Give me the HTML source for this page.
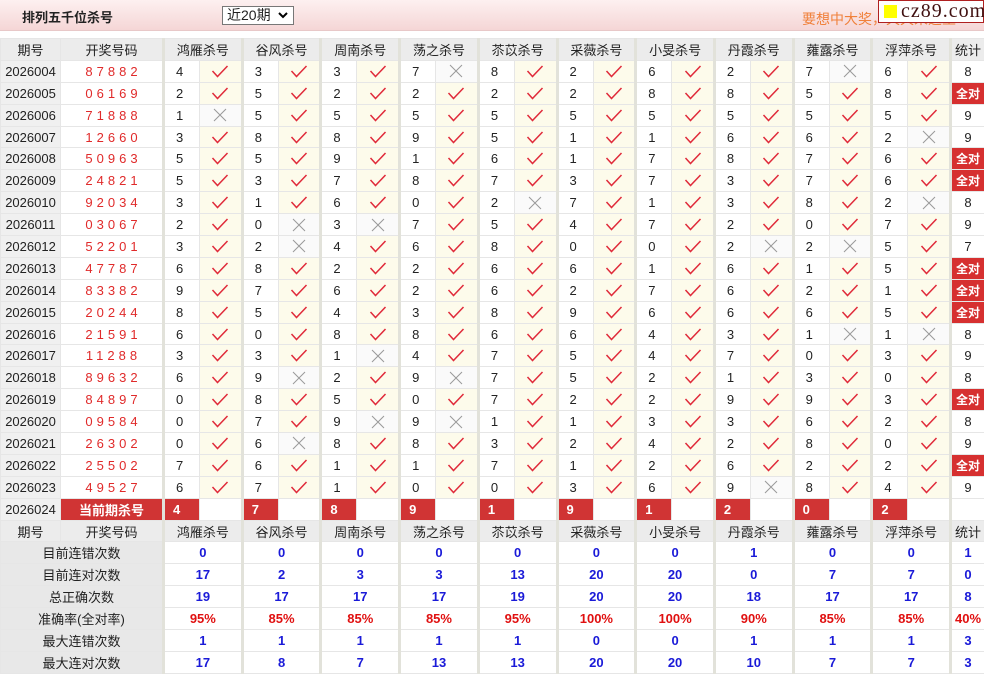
<!DOCTYPE html>
<html><head><meta charset="utf-8">
<style>
*{margin:0;padding:0;box-sizing:border-box}
body{width:984px;height:677px;background:#fff;font-family:"Liberation Sans","Noto Sans CJK SC",sans-serif;font-size:13px;color:#222;position:relative;overflow:hidden}
.bar{position:absolute;left:0;top:0;width:984px;height:31px;background:linear-gradient(#fdf0f0,#f5d6d6);border-bottom:1px solid #e8c8c8}
.ttl{position:absolute;left:22px;top:7px;font-weight:bold;font-size:13px;color:#222}
.sel{position:absolute;left:222px;top:6px;width:72px;height:19px;border:1px solid #777;background:#fff;font-size:14px;padding-left:4px;line-height:17px}
.sel svg{position:absolute;right:5px;top:5px}
.adv{position:absolute;left:802px;top:9px;color:#f0803a;font-size:14px}
.logo{position:absolute;left:878px;top:0;width:106px;height:23px;background:#fff;border:1px solid #b02020;font-family:"Liberation Serif",serif;font-size:20px;color:#401010;line-height:20px;padding-left:22px;letter-spacing:1px}
.logo i{position:absolute;left:5px;top:4px;width:13px;height:13px;background:#ffff00}
table{position:absolute;left:0;top:38px;width:984px;border-collapse:collapse;table-layout:fixed}
td{height:21.9px;border:1px solid #e6e6e6;text-align:center;white-space:nowrap;padding:0}
.h td{background:#ececec}
td.g{border-left:3px solid #e2e2da}
td.p{background:#f0f0f0}
td.n{color:#e02a2a;letter-spacing:4px;padding-left:4px}
td.v{text-align:left;padding-left:11px}
td.y{background:#fdfbeb}
td.w{background:#fafafa}
td.a{background:#d63030;color:#fff;font-weight:bold;font-size:12px}
td.r{background:#d03434;color:#fff;font-weight:bold;text-align:left;padding-left:8px}
td.cur{background:#d03434;color:#fff;font-weight:bold}
td.l{background:#e8e8e8}
td.b{color:#1a1ad8;font-weight:bold}
td.q{color:#e01010;font-weight:bold}
td svg{display:block;margin:0 auto}
</style></head><body>
<svg width="0" height="0" style="position:absolute"><defs>
<symbol id="c" viewBox="0 0 18 13"><path d="M1.5 6 L6.5 11.5 L16.5 1" fill="none" stroke="#e02a3a" stroke-width="1.5"/></symbol>
<symbol id="x" viewBox="0 0 14 14"><path d="M1 1 L13 13 M13 1 L1 13" fill="none" stroke="#999" stroke-width="1"/></symbol>
</defs></svg>
<div class="bar"><div class="ttl">排列五千位杀号</div><div class="sel">近20期<svg width="10" height="7" viewBox="0 0 10 7"><path d="M1 1 L5 5 L9 1" fill="none" stroke="#000" stroke-width="2"/></svg></div><div class="adv">要想中大奖，天天来这里</div><div class="logo"><i></i>cz89.com</div></div>
<table>
<colgroup><col style="width:60px"><col style="width:103px">
<col style="width:36px"><col style="width:42.7px"><col style="width:36px"><col style="width:42.7px"><col style="width:36px"><col style="width:42.7px"><col style="width:36px"><col style="width:42.7px"><col style="width:36px"><col style="width:42.7px"><col style="width:36px"><col style="width:42.7px"><col style="width:36px"><col style="width:42.7px"><col style="width:36px"><col style="width:42.7px"><col style="width:36px"><col style="width:42.7px"><col style="width:36px"><col style="width:42.7px">
<col style="width:34px"></colgroup>
<tr class="h"><td>期号</td><td>开奖号码</td><td class="g" colspan="2">鸿雁杀号</td><td class="g" colspan="2">谷风杀号</td><td class="g" colspan="2">周南杀号</td><td class="g" colspan="2">荡之杀号</td><td class="g" colspan="2">苶苡杀号</td><td class="g" colspan="2">采薇杀号</td><td class="g" colspan="2">小旻杀号</td><td class="g" colspan="2">丹霞杀号</td><td class="g" colspan="2">蕹露杀号</td><td class="g" colspan="2">浮萍杀号</td><td class="g">统计</td></tr>
<tr><td class="p">2026004</td><td class="n">87882</td><td class="g v">4</td><td class="y"><svg width="18" height="13"><use href="#c"/></svg></td><td class="g v">3</td><td class="y"><svg width="18" height="13"><use href="#c"/></svg></td><td class="g v">3</td><td class="y"><svg width="18" height="13"><use href="#c"/></svg></td><td class="g v">7</td><td class="w"><svg width="14" height="14"><use href="#x"/></svg></td><td class="g v">8</td><td class="y"><svg width="18" height="13"><use href="#c"/></svg></td><td class="g v">2</td><td class="y"><svg width="18" height="13"><use href="#c"/></svg></td><td class="g v">6</td><td class="y"><svg width="18" height="13"><use href="#c"/></svg></td><td class="g v">2</td><td class="y"><svg width="18" height="13"><use href="#c"/></svg></td><td class="g v">7</td><td class="w"><svg width="14" height="14"><use href="#x"/></svg></td><td class="g v">6</td><td class="y"><svg width="18" height="13"><use href="#c"/></svg></td><td class="g">8</td></tr>
<tr><td class="p">2026005</td><td class="n">06169</td><td class="g v">2</td><td class="y"><svg width="18" height="13"><use href="#c"/></svg></td><td class="g v">5</td><td class="y"><svg width="18" height="13"><use href="#c"/></svg></td><td class="g v">2</td><td class="y"><svg width="18" height="13"><use href="#c"/></svg></td><td class="g v">2</td><td class="y"><svg width="18" height="13"><use href="#c"/></svg></td><td class="g v">2</td><td class="y"><svg width="18" height="13"><use href="#c"/></svg></td><td class="g v">2</td><td class="y"><svg width="18" height="13"><use href="#c"/></svg></td><td class="g v">8</td><td class="y"><svg width="18" height="13"><use href="#c"/></svg></td><td class="g v">8</td><td class="y"><svg width="18" height="13"><use href="#c"/></svg></td><td class="g v">5</td><td class="y"><svg width="18" height="13"><use href="#c"/></svg></td><td class="g v">8</td><td class="y"><svg width="18" height="13"><use href="#c"/></svg></td><td class="g a">全对</td></tr>
<tr><td class="p">2026006</td><td class="n">71888</td><td class="g v">1</td><td class="w"><svg width="14" height="14"><use href="#x"/></svg></td><td class="g v">5</td><td class="y"><svg width="18" height="13"><use href="#c"/></svg></td><td class="g v">5</td><td class="y"><svg width="18" height="13"><use href="#c"/></svg></td><td class="g v">5</td><td class="y"><svg width="18" height="13"><use href="#c"/></svg></td><td class="g v">5</td><td class="y"><svg width="18" height="13"><use href="#c"/></svg></td><td class="g v">5</td><td class="y"><svg width="18" height="13"><use href="#c"/></svg></td><td class="g v">5</td><td class="y"><svg width="18" height="13"><use href="#c"/></svg></td><td class="g v">5</td><td class="y"><svg width="18" height="13"><use href="#c"/></svg></td><td class="g v">5</td><td class="y"><svg width="18" height="13"><use href="#c"/></svg></td><td class="g v">5</td><td class="y"><svg width="18" height="13"><use href="#c"/></svg></td><td class="g">9</td></tr>
<tr><td class="p">2026007</td><td class="n">12660</td><td class="g v">3</td><td class="y"><svg width="18" height="13"><use href="#c"/></svg></td><td class="g v">8</td><td class="y"><svg width="18" height="13"><use href="#c"/></svg></td><td class="g v">8</td><td class="y"><svg width="18" height="13"><use href="#c"/></svg></td><td class="g v">9</td><td class="y"><svg width="18" height="13"><use href="#c"/></svg></td><td class="g v">5</td><td class="y"><svg width="18" height="13"><use href="#c"/></svg></td><td class="g v">1</td><td class="y"><svg width="18" height="13"><use href="#c"/></svg></td><td class="g v">1</td><td class="y"><svg width="18" height="13"><use href="#c"/></svg></td><td class="g v">6</td><td class="y"><svg width="18" height="13"><use href="#c"/></svg></td><td class="g v">6</td><td class="y"><svg width="18" height="13"><use href="#c"/></svg></td><td class="g v">2</td><td class="w"><svg width="14" height="14"><use href="#x"/></svg></td><td class="g">9</td></tr>
<tr><td class="p">2026008</td><td class="n">50963</td><td class="g v">5</td><td class="y"><svg width="18" height="13"><use href="#c"/></svg></td><td class="g v">5</td><td class="y"><svg width="18" height="13"><use href="#c"/></svg></td><td class="g v">9</td><td class="y"><svg width="18" height="13"><use href="#c"/></svg></td><td class="g v">1</td><td class="y"><svg width="18" height="13"><use href="#c"/></svg></td><td class="g v">6</td><td class="y"><svg width="18" height="13"><use href="#c"/></svg></td><td class="g v">1</td><td class="y"><svg width="18" height="13"><use href="#c"/></svg></td><td class="g v">7</td><td class="y"><svg width="18" height="13"><use href="#c"/></svg></td><td class="g v">8</td><td class="y"><svg width="18" height="13"><use href="#c"/></svg></td><td class="g v">7</td><td class="y"><svg width="18" height="13"><use href="#c"/></svg></td><td class="g v">6</td><td class="y"><svg width="18" height="13"><use href="#c"/></svg></td><td class="g a">全对</td></tr>
<tr><td class="p">2026009</td><td class="n">24821</td><td class="g v">5</td><td class="y"><svg width="18" height="13"><use href="#c"/></svg></td><td class="g v">3</td><td class="y"><svg width="18" height="13"><use href="#c"/></svg></td><td class="g v">7</td><td class="y"><svg width="18" height="13"><use href="#c"/></svg></td><td class="g v">8</td><td class="y"><svg width="18" height="13"><use href="#c"/></svg></td><td class="g v">7</td><td class="y"><svg width="18" height="13"><use href="#c"/></svg></td><td class="g v">3</td><td class="y"><svg width="18" height="13"><use href="#c"/></svg></td><td class="g v">7</td><td class="y"><svg width="18" height="13"><use href="#c"/></svg></td><td class="g v">3</td><td class="y"><svg width="18" height="13"><use href="#c"/></svg></td><td class="g v">7</td><td class="y"><svg width="18" height="13"><use href="#c"/></svg></td><td class="g v">6</td><td class="y"><svg width="18" height="13"><use href="#c"/></svg></td><td class="g a">全对</td></tr>
<tr><td class="p">2026010</td><td class="n">92034</td><td class="g v">3</td><td class="y"><svg width="18" height="13"><use href="#c"/></svg></td><td class="g v">1</td><td class="y"><svg width="18" height="13"><use href="#c"/></svg></td><td class="g v">6</td><td class="y"><svg width="18" height="13"><use href="#c"/></svg></td><td class="g v">0</td><td class="y"><svg width="18" height="13"><use href="#c"/></svg></td><td class="g v">2</td><td class="w"><svg width="14" height="14"><use href="#x"/></svg></td><td class="g v">7</td><td class="y"><svg width="18" height="13"><use href="#c"/></svg></td><td class="g v">1</td><td class="y"><svg width="18" height="13"><use href="#c"/></svg></td><td class="g v">3</td><td class="y"><svg width="18" height="13"><use href="#c"/></svg></td><td class="g v">8</td><td class="y"><svg width="18" height="13"><use href="#c"/></svg></td><td class="g v">2</td><td class="w"><svg width="14" height="14"><use href="#x"/></svg></td><td class="g">8</td></tr>
<tr><td class="p">2026011</td><td class="n">03067</td><td class="g v">2</td><td class="y"><svg width="18" height="13"><use href="#c"/></svg></td><td class="g v">0</td><td class="w"><svg width="14" height="14"><use href="#x"/></svg></td><td class="g v">3</td><td class="w"><svg width="14" height="14"><use href="#x"/></svg></td><td class="g v">7</td><td class="y"><svg width="18" height="13"><use href="#c"/></svg></td><td class="g v">5</td><td class="y"><svg width="18" height="13"><use href="#c"/></svg></td><td class="g v">4</td><td class="y"><svg width="18" height="13"><use href="#c"/></svg></td><td class="g v">7</td><td class="y"><svg width="18" height="13"><use href="#c"/></svg></td><td class="g v">2</td><td class="y"><svg width="18" height="13"><use href="#c"/></svg></td><td class="g v">0</td><td class="y"><svg width="18" height="13"><use href="#c"/></svg></td><td class="g v">7</td><td class="y"><svg width="18" height="13"><use href="#c"/></svg></td><td class="g">9</td></tr>
<tr><td class="p">2026012</td><td class="n">52201</td><td class="g v">3</td><td class="y"><svg width="18" height="13"><use href="#c"/></svg></td><td class="g v">2</td><td class="w"><svg width="14" height="14"><use href="#x"/></svg></td><td class="g v">4</td><td class="y"><svg width="18" height="13"><use href="#c"/></svg></td><td class="g v">6</td><td class="y"><svg width="18" height="13"><use href="#c"/></svg></td><td class="g v">8</td><td class="y"><svg width="18" height="13"><use href="#c"/></svg></td><td class="g v">0</td><td class="y"><svg width="18" height="13"><use href="#c"/></svg></td><td class="g v">0</td><td class="y"><svg width="18" height="13"><use href="#c"/></svg></td><td class="g v">2</td><td class="w"><svg width="14" height="14"><use href="#x"/></svg></td><td class="g v">2</td><td class="w"><svg width="14" height="14"><use href="#x"/></svg></td><td class="g v">5</td><td class="y"><svg width="18" height="13"><use href="#c"/></svg></td><td class="g">7</td></tr>
<tr><td class="p">2026013</td><td class="n">47787</td><td class="g v">6</td><td class="y"><svg width="18" height="13"><use href="#c"/></svg></td><td class="g v">8</td><td class="y"><svg width="18" height="13"><use href="#c"/></svg></td><td class="g v">2</td><td class="y"><svg width="18" height="13"><use href="#c"/></svg></td><td class="g v">2</td><td class="y"><svg width="18" height="13"><use href="#c"/></svg></td><td class="g v">6</td><td class="y"><svg width="18" height="13"><use href="#c"/></svg></td><td class="g v">6</td><td class="y"><svg width="18" height="13"><use href="#c"/></svg></td><td class="g v">1</td><td class="y"><svg width="18" height="13"><use href="#c"/></svg></td><td class="g v">6</td><td class="y"><svg width="18" height="13"><use href="#c"/></svg></td><td class="g v">1</td><td class="y"><svg width="18" height="13"><use href="#c"/></svg></td><td class="g v">5</td><td class="y"><svg width="18" height="13"><use href="#c"/></svg></td><td class="g a">全对</td></tr>
<tr><td class="p">2026014</td><td class="n">83382</td><td class="g v">9</td><td class="y"><svg width="18" height="13"><use href="#c"/></svg></td><td class="g v">7</td><td class="y"><svg width="18" height="13"><use href="#c"/></svg></td><td class="g v">6</td><td class="y"><svg width="18" height="13"><use href="#c"/></svg></td><td class="g v">2</td><td class="y"><svg width="18" height="13"><use href="#c"/></svg></td><td class="g v">6</td><td class="y"><svg width="18" height="13"><use href="#c"/></svg></td><td class="g v">2</td><td class="y"><svg width="18" height="13"><use href="#c"/></svg></td><td class="g v">7</td><td class="y"><svg width="18" height="13"><use href="#c"/></svg></td><td class="g v">6</td><td class="y"><svg width="18" height="13"><use href="#c"/></svg></td><td class="g v">2</td><td class="y"><svg width="18" height="13"><use href="#c"/></svg></td><td class="g v">1</td><td class="y"><svg width="18" height="13"><use href="#c"/></svg></td><td class="g a">全对</td></tr>
<tr><td class="p">2026015</td><td class="n">20244</td><td class="g v">8</td><td class="y"><svg width="18" height="13"><use href="#c"/></svg></td><td class="g v">5</td><td class="y"><svg width="18" height="13"><use href="#c"/></svg></td><td class="g v">4</td><td class="y"><svg width="18" height="13"><use href="#c"/></svg></td><td class="g v">3</td><td class="y"><svg width="18" height="13"><use href="#c"/></svg></td><td class="g v">8</td><td class="y"><svg width="18" height="13"><use href="#c"/></svg></td><td class="g v">9</td><td class="y"><svg width="18" height="13"><use href="#c"/></svg></td><td class="g v">6</td><td class="y"><svg width="18" height="13"><use href="#c"/></svg></td><td class="g v">6</td><td class="y"><svg width="18" height="13"><use href="#c"/></svg></td><td class="g v">6</td><td class="y"><svg width="18" height="13"><use href="#c"/></svg></td><td class="g v">5</td><td class="y"><svg width="18" height="13"><use href="#c"/></svg></td><td class="g a">全对</td></tr>
<tr><td class="p">2026016</td><td class="n">21591</td><td class="g v">6</td><td class="y"><svg width="18" height="13"><use href="#c"/></svg></td><td class="g v">0</td><td class="y"><svg width="18" height="13"><use href="#c"/></svg></td><td class="g v">8</td><td class="y"><svg width="18" height="13"><use href="#c"/></svg></td><td class="g v">8</td><td class="y"><svg width="18" height="13"><use href="#c"/></svg></td><td class="g v">6</td><td class="y"><svg width="18" height="13"><use href="#c"/></svg></td><td class="g v">6</td><td class="y"><svg width="18" height="13"><use href="#c"/></svg></td><td class="g v">4</td><td class="y"><svg width="18" height="13"><use href="#c"/></svg></td><td class="g v">3</td><td class="y"><svg width="18" height="13"><use href="#c"/></svg></td><td class="g v">1</td><td class="w"><svg width="14" height="14"><use href="#x"/></svg></td><td class="g v">1</td><td class="w"><svg width="14" height="14"><use href="#x"/></svg></td><td class="g">8</td></tr>
<tr><td class="p">2026017</td><td class="n">11288</td><td class="g v">3</td><td class="y"><svg width="18" height="13"><use href="#c"/></svg></td><td class="g v">3</td><td class="y"><svg width="18" height="13"><use href="#c"/></svg></td><td class="g v">1</td><td class="w"><svg width="14" height="14"><use href="#x"/></svg></td><td class="g v">4</td><td class="y"><svg width="18" height="13"><use href="#c"/></svg></td><td class="g v">7</td><td class="y"><svg width="18" height="13"><use href="#c"/></svg></td><td class="g v">5</td><td class="y"><svg width="18" height="13"><use href="#c"/></svg></td><td class="g v">4</td><td class="y"><svg width="18" height="13"><use href="#c"/></svg></td><td class="g v">7</td><td class="y"><svg width="18" height="13"><use href="#c"/></svg></td><td class="g v">0</td><td class="y"><svg width="18" height="13"><use href="#c"/></svg></td><td class="g v">3</td><td class="y"><svg width="18" height="13"><use href="#c"/></svg></td><td class="g">9</td></tr>
<tr><td class="p">2026018</td><td class="n">89632</td><td class="g v">6</td><td class="y"><svg width="18" height="13"><use href="#c"/></svg></td><td class="g v">9</td><td class="w"><svg width="14" height="14"><use href="#x"/></svg></td><td class="g v">2</td><td class="y"><svg width="18" height="13"><use href="#c"/></svg></td><td class="g v">9</td><td class="w"><svg width="14" height="14"><use href="#x"/></svg></td><td class="g v">7</td><td class="y"><svg width="18" height="13"><use href="#c"/></svg></td><td class="g v">5</td><td class="y"><svg width="18" height="13"><use href="#c"/></svg></td><td class="g v">2</td><td class="y"><svg width="18" height="13"><use href="#c"/></svg></td><td class="g v">1</td><td class="y"><svg width="18" height="13"><use href="#c"/></svg></td><td class="g v">3</td><td class="y"><svg width="18" height="13"><use href="#c"/></svg></td><td class="g v">0</td><td class="y"><svg width="18" height="13"><use href="#c"/></svg></td><td class="g">8</td></tr>
<tr><td class="p">2026019</td><td class="n">84897</td><td class="g v">0</td><td class="y"><svg width="18" height="13"><use href="#c"/></svg></td><td class="g v">8</td><td class="y"><svg width="18" height="13"><use href="#c"/></svg></td><td class="g v">5</td><td class="y"><svg width="18" height="13"><use href="#c"/></svg></td><td class="g v">0</td><td class="y"><svg width="18" height="13"><use href="#c"/></svg></td><td class="g v">7</td><td class="y"><svg width="18" height="13"><use href="#c"/></svg></td><td class="g v">2</td><td class="y"><svg width="18" height="13"><use href="#c"/></svg></td><td class="g v">2</td><td class="y"><svg width="18" height="13"><use href="#c"/></svg></td><td class="g v">9</td><td class="y"><svg width="18" height="13"><use href="#c"/></svg></td><td class="g v">9</td><td class="y"><svg width="18" height="13"><use href="#c"/></svg></td><td class="g v">3</td><td class="y"><svg width="18" height="13"><use href="#c"/></svg></td><td class="g a">全对</td></tr>
<tr><td class="p">2026020</td><td class="n">09584</td><td class="g v">0</td><td class="y"><svg width="18" height="13"><use href="#c"/></svg></td><td class="g v">7</td><td class="y"><svg width="18" height="13"><use href="#c"/></svg></td><td class="g v">9</td><td class="w"><svg width="14" height="14"><use href="#x"/></svg></td><td class="g v">9</td><td class="w"><svg width="14" height="14"><use href="#x"/></svg></td><td class="g v">1</td><td class="y"><svg width="18" height="13"><use href="#c"/></svg></td><td class="g v">1</td><td class="y"><svg width="18" height="13"><use href="#c"/></svg></td><td class="g v">3</td><td class="y"><svg width="18" height="13"><use href="#c"/></svg></td><td class="g v">3</td><td class="y"><svg width="18" height="13"><use href="#c"/></svg></td><td class="g v">6</td><td class="y"><svg width="18" height="13"><use href="#c"/></svg></td><td class="g v">2</td><td class="y"><svg width="18" height="13"><use href="#c"/></svg></td><td class="g">8</td></tr>
<tr><td class="p">2026021</td><td class="n">26302</td><td class="g v">0</td><td class="y"><svg width="18" height="13"><use href="#c"/></svg></td><td class="g v">6</td><td class="w"><svg width="14" height="14"><use href="#x"/></svg></td><td class="g v">8</td><td class="y"><svg width="18" height="13"><use href="#c"/></svg></td><td class="g v">8</td><td class="y"><svg width="18" height="13"><use href="#c"/></svg></td><td class="g v">3</td><td class="y"><svg width="18" height="13"><use href="#c"/></svg></td><td class="g v">2</td><td class="y"><svg width="18" height="13"><use href="#c"/></svg></td><td class="g v">4</td><td class="y"><svg width="18" height="13"><use href="#c"/></svg></td><td class="g v">2</td><td class="y"><svg width="18" height="13"><use href="#c"/></svg></td><td class="g v">8</td><td class="y"><svg width="18" height="13"><use href="#c"/></svg></td><td class="g v">0</td><td class="y"><svg width="18" height="13"><use href="#c"/></svg></td><td class="g">9</td></tr>
<tr><td class="p">2026022</td><td class="n">25502</td><td class="g v">7</td><td class="y"><svg width="18" height="13"><use href="#c"/></svg></td><td class="g v">6</td><td class="y"><svg width="18" height="13"><use href="#c"/></svg></td><td class="g v">1</td><td class="y"><svg width="18" height="13"><use href="#c"/></svg></td><td class="g v">1</td><td class="y"><svg width="18" height="13"><use href="#c"/></svg></td><td class="g v">7</td><td class="y"><svg width="18" height="13"><use href="#c"/></svg></td><td class="g v">1</td><td class="y"><svg width="18" height="13"><use href="#c"/></svg></td><td class="g v">2</td><td class="y"><svg width="18" height="13"><use href="#c"/></svg></td><td class="g v">6</td><td class="y"><svg width="18" height="13"><use href="#c"/></svg></td><td class="g v">2</td><td class="y"><svg width="18" height="13"><use href="#c"/></svg></td><td class="g v">2</td><td class="y"><svg width="18" height="13"><use href="#c"/></svg></td><td class="g a">全对</td></tr>
<tr><td class="p">2026023</td><td class="n">49527</td><td class="g v">6</td><td class="y"><svg width="18" height="13"><use href="#c"/></svg></td><td class="g v">7</td><td class="y"><svg width="18" height="13"><use href="#c"/></svg></td><td class="g v">1</td><td class="y"><svg width="18" height="13"><use href="#c"/></svg></td><td class="g v">0</td><td class="y"><svg width="18" height="13"><use href="#c"/></svg></td><td class="g v">0</td><td class="y"><svg width="18" height="13"><use href="#c"/></svg></td><td class="g v">3</td><td class="y"><svg width="18" height="13"><use href="#c"/></svg></td><td class="g v">6</td><td class="y"><svg width="18" height="13"><use href="#c"/></svg></td><td class="g v">9</td><td class="w"><svg width="14" height="14"><use href="#x"/></svg></td><td class="g v">8</td><td class="y"><svg width="18" height="13"><use href="#c"/></svg></td><td class="g v">4</td><td class="y"><svg width="18" height="13"><use href="#c"/></svg></td><td class="g">9</td></tr>
<tr><td class="p">2026024</td><td class="cur">当前期杀号</td><td class="g r">4</td><td></td><td class="g r">7</td><td></td><td class="g r">8</td><td></td><td class="g r">9</td><td></td><td class="g r">1</td><td></td><td class="g r">9</td><td></td><td class="g r">1</td><td></td><td class="g r">2</td><td></td><td class="g r">0</td><td></td><td class="g r">2</td><td></td><td class="g"></td></tr>
<tr class="h"><td>期号</td><td>开奖号码</td><td class="g" colspan="2">鸿雁杀号</td><td class="g" colspan="2">谷风杀号</td><td class="g" colspan="2">周南杀号</td><td class="g" colspan="2">荡之杀号</td><td class="g" colspan="2">苶苡杀号</td><td class="g" colspan="2">采薇杀号</td><td class="g" colspan="2">小旻杀号</td><td class="g" colspan="2">丹霞杀号</td><td class="g" colspan="2">蕹露杀号</td><td class="g" colspan="2">浮萍杀号</td><td class="g">统计</td></tr>
<tr><td class="l" colspan="2">目前连错次数</td><td class="g b" colspan="2">0</td><td class="g b" colspan="2">0</td><td class="g b" colspan="2">0</td><td class="g b" colspan="2">0</td><td class="g b" colspan="2">0</td><td class="g b" colspan="2">0</td><td class="g b" colspan="2">0</td><td class="g b" colspan="2">1</td><td class="g b" colspan="2">0</td><td class="g b" colspan="2">0</td><td class="g b">1</td></tr>
<tr><td class="l" colspan="2">目前连对次数</td><td class="g b" colspan="2">17</td><td class="g b" colspan="2">2</td><td class="g b" colspan="2">3</td><td class="g b" colspan="2">3</td><td class="g b" colspan="2">13</td><td class="g b" colspan="2">20</td><td class="g b" colspan="2">20</td><td class="g b" colspan="2">0</td><td class="g b" colspan="2">7</td><td class="g b" colspan="2">7</td><td class="g b">0</td></tr>
<tr><td class="l" colspan="2">总正确次数</td><td class="g b" colspan="2">19</td><td class="g b" colspan="2">17</td><td class="g b" colspan="2">17</td><td class="g b" colspan="2">17</td><td class="g b" colspan="2">19</td><td class="g b" colspan="2">20</td><td class="g b" colspan="2">20</td><td class="g b" colspan="2">18</td><td class="g b" colspan="2">17</td><td class="g b" colspan="2">17</td><td class="g b">8</td></tr>
<tr><td class="l" colspan="2">准确率(全对率)</td><td class="g q" colspan="2">95%</td><td class="g q" colspan="2">85%</td><td class="g q" colspan="2">85%</td><td class="g q" colspan="2">85%</td><td class="g q" colspan="2">95%</td><td class="g q" colspan="2">100%</td><td class="g q" colspan="2">100%</td><td class="g q" colspan="2">90%</td><td class="g q" colspan="2">85%</td><td class="g q" colspan="2">85%</td><td class="g q">40%</td></tr>
<tr><td class="l" colspan="2">最大连错次数</td><td class="g b" colspan="2">1</td><td class="g b" colspan="2">1</td><td class="g b" colspan="2">1</td><td class="g b" colspan="2">1</td><td class="g b" colspan="2">1</td><td class="g b" colspan="2">0</td><td class="g b" colspan="2">0</td><td class="g b" colspan="2">1</td><td class="g b" colspan="2">1</td><td class="g b" colspan="2">1</td><td class="g b">3</td></tr>
<tr><td class="l" colspan="2">最大连对次数</td><td class="g b" colspan="2">17</td><td class="g b" colspan="2">8</td><td class="g b" colspan="2">7</td><td class="g b" colspan="2">13</td><td class="g b" colspan="2">13</td><td class="g b" colspan="2">20</td><td class="g b" colspan="2">20</td><td class="g b" colspan="2">10</td><td class="g b" colspan="2">7</td><td class="g b" colspan="2">7</td><td class="g b">3</td></tr>
</table>
</body></html>
